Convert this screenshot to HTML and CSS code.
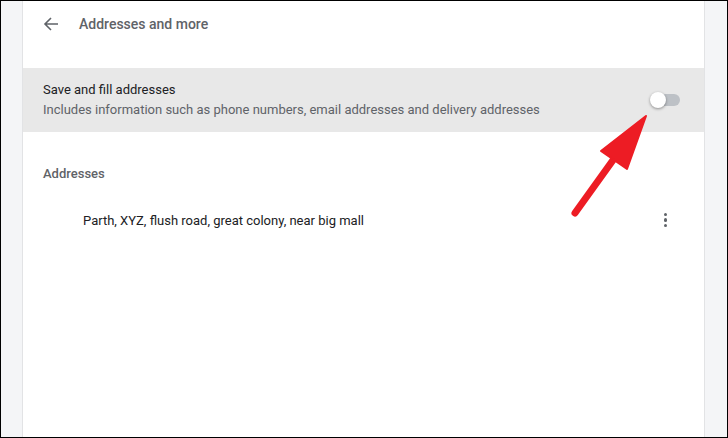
FILE: index.html
```html
<!DOCTYPE html>
<html>
<head>
<meta charset="utf-8">
<link rel="stylesheet" href="styles.css">
</head>
<body>
<div class="frame">
  <div class="card">
    <div class="header">
      <svg class="back" width="16" height="16" viewBox="0 0 16 16"><path d="M15 8H2.5M8 2 2 8l6 6" fill="none" stroke="#5f6368" stroke-width="1.6"/></svg>
      <span class="title">Addresses and more</span>
    </div>
    <div class="setting">
      <div class="setting-text">
        <div class="label">Save and fill addresses</div>
        <div class="sub">Includes information such as phone numbers, email addresses and delivery addresses</div>
      </div>
      <div class="toggle"><span class="track"></span><span class="knob"></span></div>
    </div>
    <div class="section-title">Addresses</div>
    <div class="address-row">
      <span class="address">Parth, XYZ, flush road, great colony, near big mall</span>
      <span class="kebab"><i></i><i></i><i></i></span>
    </div>
    <svg class="arrow" width="100" height="120" viewBox="0 0 100 120">
      <path d="M4 100 L50 36" stroke="#ed1c24" stroke-width="7" stroke-linecap="round" fill="none"/>
      <path d="M75 3 L30 38 L56 56 Z" fill="#ed1c24" stroke="#ed1c24" stroke-width="2" stroke-linejoin="round"/>
    </svg>
  </div>
</div>
</body>
</html>
```
FILE: styles.css
```css
* { box-sizing: border-box; }
html, body { margin: 0; padding: 0; }
body { font-family: Roboto, "Liberation Sans", sans-serif; }
.frame {
  width: 728px;
  height: 438px;
  border: 1px solid #000;
  background: #f4f5f7;
  padding: 0 22px 0 21px;
  overflow: hidden;
}
.card {
  position: relative;
  background: #fff;
  height: 100%;
  border-left: 1px solid #e2e3e5;
  border-right: 1px solid #e2e3e5;
}
.header {
  height: 45px;
  display: flex;
  align-items: center;
  padding-left: 20px;
}
.back { margin-right: 20px; }
.title {
  font-size: 14px;
  font-weight: 500;
  color: #5f6368;
}
.setting {
  margin-top: 22px;
  height: 64px;
  background: #e8e8e8;
  display: flex;
  align-items: center;
  padding: 0 24px 0 20px;
}
.setting-text { flex: 1; }
.label { font-size: 13px; color: #202124; line-height: 20px; }
.sub { font-size: 13px; color: #5f6368; line-height: 20px; }
.toggle {
  position: relative;
  width: 29px;
  height: 16px;
  display: flex;
  align-items: center;
}
.track {
  display: block;
  width: 28px;
  height: 12px;
  border-radius: 6px;
  background: #bdc1c6;
  margin-left: 1px;
}
.knob {
  position: absolute;
  left: -1px;
  top: 0;
  width: 16px;
  height: 16px;
  border-radius: 50%;
  background: #fff;
  box-shadow: 0 1px 3px rgba(0,0,0,0.4);
}
.section-title {
  margin-top: 32px;
  padding-left: 20px;
  font-size: 13px;
  font-weight: 500;
  color: #5f6368;
  line-height: 20px;
}
.address-row {
  margin-top: 26px;
  display: flex;
  align-items: center;
  padding: 0 37px 0 60px;
  height: 20px;
}
.address { flex: 1; font-size: 13px; color: #202124; }
.kebab {
  display: flex;
  flex-direction: column;
  gap: 2px;
}
.kebab i {
  display: block;
  width: 3.5px;
  height: 3.5px;
  border-radius: 50%;
  background: #5f6368;
}
.arrow {
  position: absolute;
  left: 548px;
  top: 112px;
}
```
